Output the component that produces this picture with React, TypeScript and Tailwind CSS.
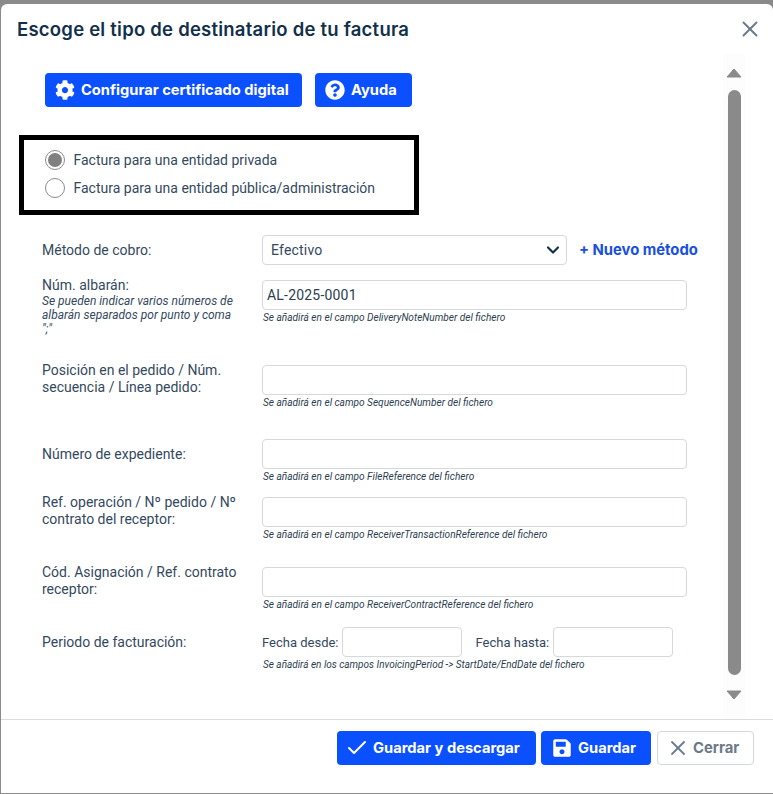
import { Check, ChevronDown, X } from 'lucide-react';
import { FaCog, FaQuestionCircle, FaSave } from 'react-icons/fa';

const heading = "font-['Inter',sans-serif]";
const primaryBtn = `${heading} flex h-[34px] items-center rounded bg-[#0a50ff] text-[14.7px] font-bold text-white`;

const Field = ({ hint, value, width = 'w-[425px]' }: { hint?: string; value?: string; width?: string }) => (
  <div>
    <div className={`${width} h-[30px] rounded border border-[#d5d8dc] bg-white px-1 text-[14px] leading-[28px] tracking-[0.2px] text-[#2c3e50]`}>
      {value}
    </div>
    {hint && <p className="mt-px pl-px text-[10.1px] italic leading-[13px] text-[#2c3e50]">{hint}</p>}
  </div>
);

const Radio = ({ label, checked }: { label: string; checked?: boolean }) => (
  <label className="flex h-[28px] items-center gap-[8.5px] text-[14px] text-[#34495e]">
    <span className="flex size-[20px] items-center justify-center rounded-full border border-[#8a8a8a] bg-white">
      {checked && <span className="size-[14px] rounded-full bg-[#808080]" />}
    </span>
    {label}
  </label>
);

const rows = [
  {
    label: 'Posición en el pedido / Núm. secuencia / Línea pedido:',
    hint: 'Se añadirá en el campo SequenceNumber del fichero',
    h: 'h-[74px]',
    labelClass: '-mt-[3px]',
  },
  {
    label: 'Número de expediente:',
    hint: 'Se añadirá en el campo FileReference del fichero',
    h: 'h-[58px]',
    labelClass: 'pt-[7px]',
  },
  {
    label: 'Ref. operación / Nº pedido / Nº contrato del receptor:',
    hint: 'Se añadirá en el campo ReceiverTransactionReference del fichero',
    h: 'h-[70px]',
    labelClass: '-mt-[3px]',
  },
  {
    label: 'Cód. Asignación / Ref. contrato receptor:',
    hint: 'Se añadirá en el campo ReceiverContractReference del fichero',
    h: 'h-[60px]',
    labelClass: '-mt-[3px]',
  },
];

export default function App() {
  return (
    <div className="h-[794px] w-[773px] overflow-hidden bg-[#8a8a8a] pt-[4px] pl-px font-['Roboto',sans-serif]">
      <div className="flex h-[789px] flex-col rounded-t-md bg-white">
        {/* header */}
        <div className="flex h-[50px] shrink-0 items-center justify-between pl-[16px] pr-[10px]">
          <h1 className={`${heading} pt-[2px] text-[18.5px] font-semibold tracking-[0.23px] text-[#12304a]`}>
            Escoge el tipo de destinatario de tu factura
          </h1>
          <X size={26} strokeWidth={1.8} className="text-[#6b7a89]" />
        </div>

        {/* body */}
        <div className="flex h-[665px] shrink-0">
          <div className="w-[722px] pl-[18px]">
            <div className="flex gap-[13px] pl-[26px] pt-[19px]">
              <button className={`${primaryBtn} w-[257px] gap-[6px] pl-[10px]`}>
                <FaCog size={20} />
                Configurar certificado digital
              </button>
              <button className={`${primaryBtn} w-[97px] gap-[6px] pl-[10px]`}>
                <FaQuestionCircle size={20} />
                Ayuda
              </button>
            </div>

            <div className="mt-[28px] h-[80px] w-[400px] border-[5px] border-black pl-[21px] pt-[6px]">
              <Radio label="Factura para una entidad privada" checked />
              <Radio label="Factura para una entidad pública/administración" />
            </div>

            <div className="mt-[20px] pl-[23px] text-[14px] leading-[17px] text-[#34495e]">
              <div className="grid h-[45px] grid-cols-[220px_1fr]">
                <span className="pt-[7px]">Método de cobro:</span>
                <div className="flex items-start gap-[12px]">
                  <div className="flex h-[30px] w-[305px] items-center justify-between rounded border border-[#d5d8dc] pl-[8px] pr-[3px] tracking-[0.2px]">
                    Efectivo
                    <ChevronDown size={20} strokeWidth={2.6} className="text-[#12304a]" />
                  </div>
                  <span className={`${heading} pt-[7px] text-[14.8px] font-bold text-[#1a4fe0]`}>+ Nuevo método</span>
                </div>
              </div>

              <div className="grid h-[85px] grid-cols-[220px_1fr]">
                <div className="-mt-[3px]">
                  <p>Núm. albarán:</p>
                  <p className="w-[196px] text-[12px] italic leading-[14px]">
                    Se pueden indicar varios números de albarán separados por punto y coma ";"
                  </p>
                </div>
                <Field value="AL-2025-0001" hint="Se añadirá en el campo DeliveryNoteNumber del fichero" />
              </div>

              {rows.map((row) => (
                <div key={row.hint} className={`grid ${row.h} grid-cols-[220px_1fr]`}>
                  <span className={`block w-[200px] ${row.labelClass}`}>{row.label}</span>
                  <Field hint={row.hint} />
                </div>
              ))}

              <div className="grid grid-cols-[220px_1fr]">
                <span className="pt-[7px]">Periodo de facturación:</span>
                <div>
                  <div className="flex items-center text-[13px]">
                    <span className="mr-[3px]">Fecha desde:</span>
                    <Field width="w-[120px]" />
                    <span className="ml-[14px] mr-[4px]">Fecha hasta:</span>
                    <Field width="w-[120px]" />
                  </div>
                  <p className="pl-px pt-px text-[10px] italic leading-[13px] text-[#2c3e50]">
                    Se añadirá en los campos InvoicingPeriod -&gt; StartDate/EndDate del fichero
                  </p>
                </div>
              </div>
            </div>
          </div>

          {/* scrollbar */}
          <div className="flex w-[22px] flex-col items-center bg-[#fdfdfd] pb-[19px] pt-[14px]">
            <svg width="16" height="10" viewBox="0 0 16 10"><path d="M8 1 15 9H1Z" fill="#8a8a8a" stroke="#8a8a8a" strokeLinejoin="round" /></svg>
            <div className="mt-[12px] w-[13px] flex-1 rounded-full bg-[#8a8a8a]" />
            <svg className="mt-[15px]" width="16" height="10" viewBox="0 0 16 10"><path d="M1 1H15L8 9Z" fill="#8a8a8a" stroke="#8a8a8a" strokeLinejoin="round" /></svg>
          </div>
        </div>

        {/* footer */}
        <div className="flex flex-1 justify-end gap-[5px] border-t border-[#dcdcdc] pr-[19px] pt-[11px]">
          <button className={`${primaryBtn} w-[199px] gap-[4px] pl-[8px]`}>
            <Check size={24} strokeWidth={2} />
            Guardar y descargar
          </button>
          <button className={`${primaryBtn} w-[110px] gap-[6px] pl-[11px]`}>
            <FaSave size={20} />
            Guardar
          </button>
          <button className={`${heading} ml-[1px] flex h-[34px] w-[97px] items-center gap-[3px] rounded border border-[#d5d8dc] bg-white pl-[8px] text-[14.8px] font-bold text-[#6b7a89]`}>
            <X size={24} strokeWidth={1.8} />
            Cerrar
          </button>
        </div>
      </div>
    </div>
  );
}
